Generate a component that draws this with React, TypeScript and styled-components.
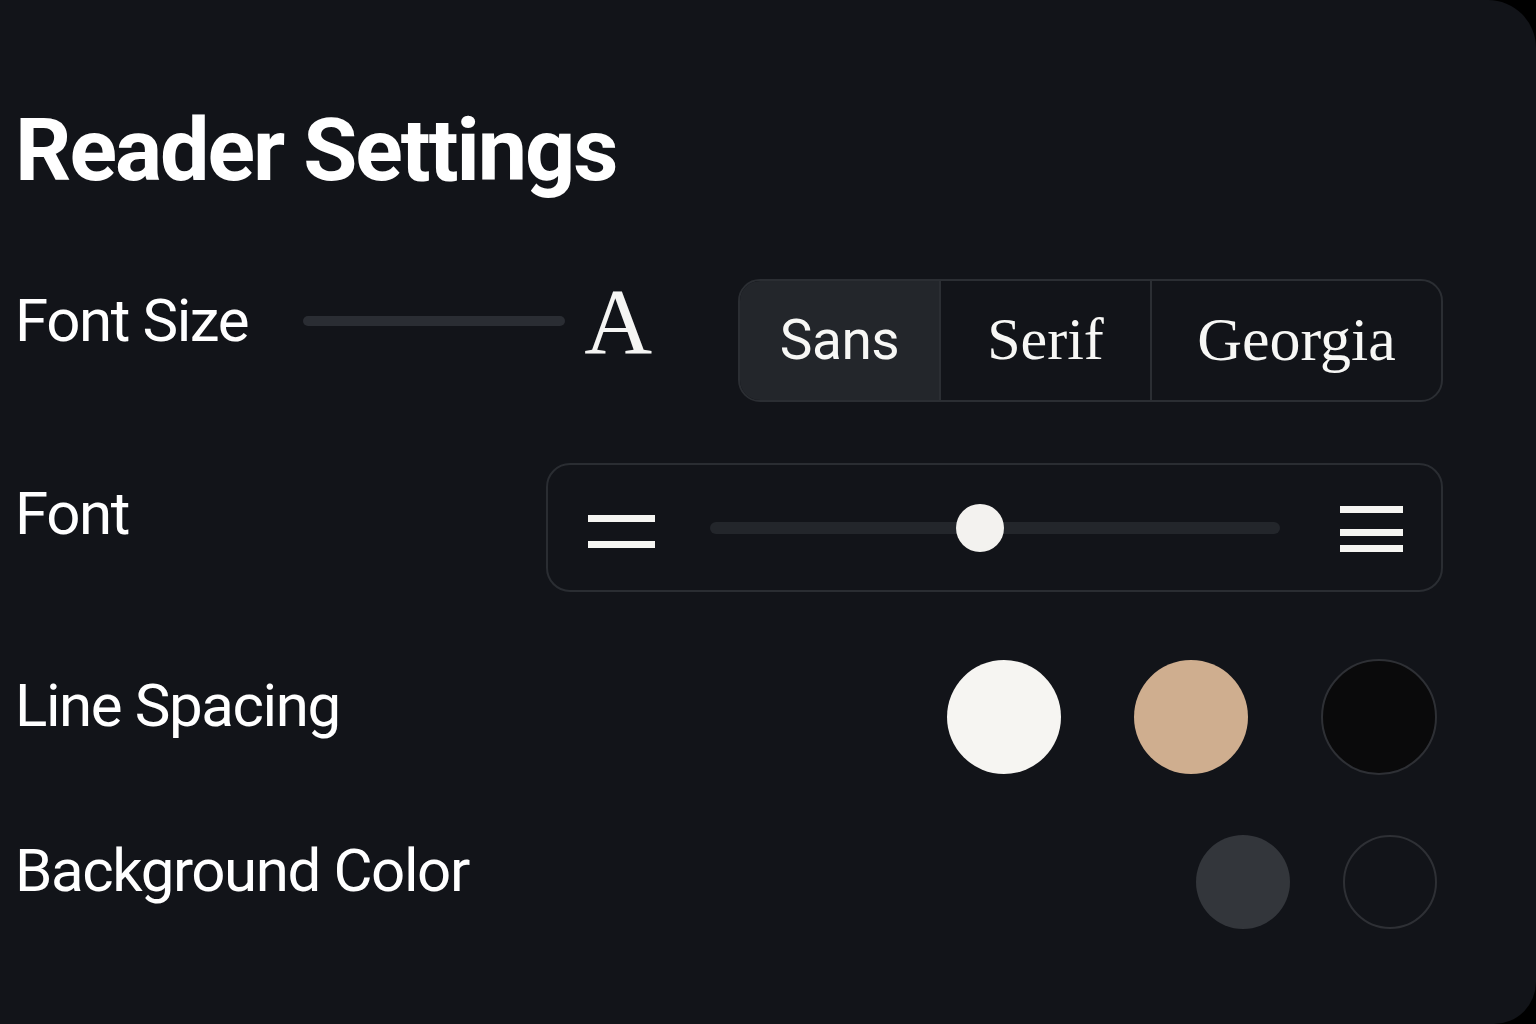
import styled, { createGlobalStyle } from "styled-components";

const GlobalStyle = createGlobalStyle`
  html, body {
    margin: 0;
    padding: 0;
    background: #000;
  }
  body {
    font-family: Roboto, "Liberation Sans", sans-serif;
    color: #fff;
  }
`;

const Panel = styled.div`
  width: 1536px;
  height: 1024px;
  box-sizing: border-box;
  background: #121419;
  border-radius: 0 48px 42px 0;
  padding: 100px 93px 0 15px;
  display: flex;
  flex-direction: column;
`;

const Title = styled.h1`
  margin: 0 0 79px;
  font-size: 88px;
  line-height: 100px;
  font-weight: 700;
  letter-spacing: -2px;
  color: #fff;
`;

const Row = styled.div<{ $height: number; $gap?: number }>`
  display: flex;
  align-items: center;
  height: ${(p) => p.$height}px;
  margin-bottom: ${(p) => p.$gap ?? 0}px;
`;

const Label = styled.span<{ $lift: number }>`
  font-size: 60px;
  line-height: 60px;
  font-weight: 400;
  letter-spacing: -1.4px;
  padding-bottom: ${(p) => p.$lift}px;
  white-space: nowrap;
`;

const LeftGroup = styled.div`
  display: flex;
  align-items: center;
  padding-bottom: 40px;
`;

const SizeTrack = styled.div`
  width: 262px;
  height: 10px;
  border-radius: 5px;
  background: #2a2d33;
  margin-left: 55px;
`;

const BigA = styled.span`
  font-family: "Liberation Serif", "Times New Roman", serif;
  font-size: 94px;
  line-height: 94px;
  margin-left: 19px;
  color: #f5f5f3;
`;

const Segmented = styled.div`
  margin-left: auto;
  display: flex;
  height: 123px;
  box-sizing: border-box;
  border: 2px solid #2b2e33;
  border-radius: 22px;
  overflow: hidden;
`;

const Segment = styled.div<{ $width: number; $active?: boolean; $font: string; $size: number }>`
  width: ${(p) => p.$width}px;
  box-sizing: border-box;
  display: flex;
  align-items: center;
  justify-content: center;
  padding-bottom: 2px;
  background: ${(p) => (p.$active ? "#23262b" : "transparent")};
  border-left: ${(p) => (p.$active ? "none" : "2px solid #2b2e33")};
  font-family: ${(p) => p.$font};
  font-size: ${(p) => p.$size}px;
  letter-spacing: ${(p) => (p.$active ? "-0.5px" : "0")};
  color: #f7f7f5;
`;

const SpacingBox = styled.div`
  margin-left: auto;
  width: 897px;
  height: 129px;
  box-sizing: border-box;
  border: 2px solid #2a2d32;
  border-radius: 24px;
  display: flex;
  align-items: center;
  padding: 0 38px 0 40px;
`;

const SpacingTrack = styled.div`
  position: relative;
  width: 570px;
  height: 12px;
  border-radius: 6px;
  background: #23262b;
  margin: 0 60px 0 55px;
`;

const Thumb = styled.div`
  position: absolute;
  top: 50%;
  width: 48px;
  height: 48px;
  border-radius: 50%;
  background: #f3f2ef;
  transform: translate(-50%, -50%);
`;

const Swatches = styled.div<{ $gap: number }>`
  margin-left: auto;
  display: flex;
  align-items: center;
  gap: ${(p) => p.$gap}px;
  padding-right: 6px;
`;

const Swatch = styled.div<{ $size: number; $color: string; $ring?: boolean }>`
  width: ${(p) => p.$size}px;
  height: ${(p) => p.$size}px;
  box-sizing: border-box;
  border-radius: 50%;
  background: ${(p) => p.$color};
  border: ${(p) => (p.$ring ? "2px solid #2e3035" : "none")};
`;

const TwoLines = () => (
  <svg width="67" height="40" viewBox="0 0 67 40">
    <rect x="0" y="7" width="67" height="7" fill="#f5f5f2" />
    <rect x="0" y="33" width="67" height="7" fill="#f5f5f2" />
  </svg>
);

const ThreeLines = () => (
  <svg width="63" height="50" viewBox="0 0 63 50">
    <rect x="0" y="3" width="63" height="7" fill="#f5f5f2" />
    <rect x="0" y="26" width="63" height="7" fill="#f5f5f2" />
    <rect x="0" y="42" width="63" height="7" fill="#f5f5f2" />
  </svg>
);

const spacingValue = 270 / 570;

export default function App() {
  return (
    <>
      <GlobalStyle />
      <Panel>
        <Title>Reader Settings</Title>

        <Row $height={123} $gap={61}>
          <LeftGroup>
            <Label $lift={0}>Font Size</Label>
            <SizeTrack />
            <BigA>A</BigA>
          </LeftGroup>
          <Segmented>
            <Segment $width={199} $active $font="Roboto, sans-serif" $size={55}>
              Sans
            </Segment>
            <Segment $width={211} $font="'Liberation Serif', serif" $size={60}>
              Serif
            </Segment>
            <Segment $width={291} $font="Georgia, 'Liberation Serif', serif" $size={62}>
              Georgia
            </Segment>
          </Segmented>
        </Row>

        <Row $height={129} $gap={67}>
          <Label $lift={28}>Font</Label>
          <SpacingBox>
            <TwoLines />
            <SpacingTrack>
              <Thumb style={{ left: `${spacingValue * 100}%` }} />
            </SpacingTrack>
            <ThreeLines />
          </SpacingBox>
        </Row>

        <Row $height={116} $gap={59}>
          <Label $lift={22}>Line Spacing</Label>
          <Swatches $gap={73}>
            <Swatch $size={114} $color="#f6f5f2" />
            <Swatch $size={114} $color="#cfae8f" />
            <Swatch $size={116} $color="#0a0a0b" $ring />
          </Swatches>
        </Row>

        <Row $height={95}>
          <Label $lift={22}>Background Color</Label>
          <Swatches $gap={53}>
            <Swatch $size={94} $color="#33363b" />
            <Swatch $size={94} $color="transparent" $ring />
          </Swatches>
        </Row>
      </Panel>
    </>
  );
}
